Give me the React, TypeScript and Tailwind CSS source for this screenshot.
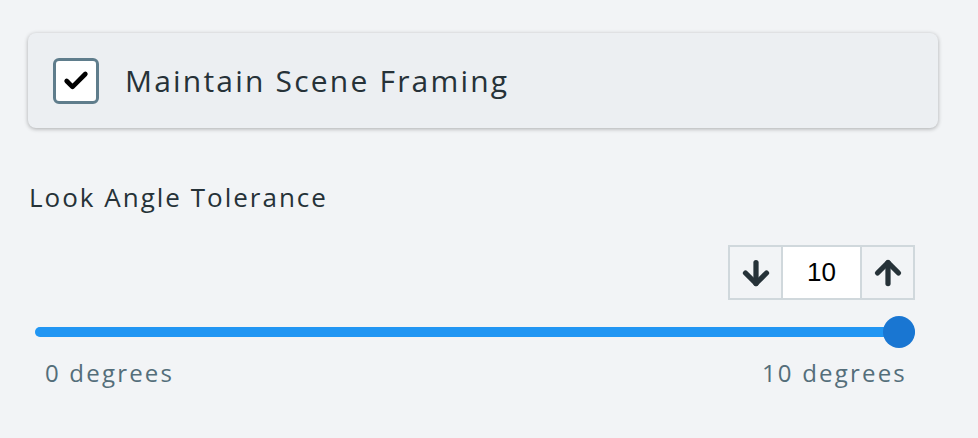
import { Check, ArrowDown, ArrowUp } from 'lucide-react';

export default function App() {
  const value = 10;
  const max = 10;
  const pct = (value / max) * 100;

  return (
    <div
      className="w-[978px] h-[438px] bg-[#f2f4f6] text-[#263238] overflow-hidden"
      style={{ fontFamily: '"Open Sans", "DejaVu Sans", sans-serif' }}
    >
      <div className="pt-[33px] pl-[28px] pr-[40px]">
        <div className="h-[95px] rounded-lg bg-[#eceff2] shadow-[0_1px_4px_rgba(0,0,0,0.3)] flex items-center pl-[25px]">
          <div className="w-[46px] h-[46px] rounded-md border-[3px] border-[#5f7d8c] bg-white flex items-center justify-center">
            <Check className="w-7 h-7 text-black" strokeWidth={4} />
          </div>
          <span className="ml-[26px] text-[30px] tracking-[2.2px]">Maintain Scene Framing</span>
        </div>

        <div className="mt-[52px] pl-[1px] text-[26px] leading-[34px] tracking-[2px]">Look Angle Tolerance</div>

        <div className="mt-[31px] flex justify-end pr-[23px]">
          <div className="flex h-[55px] border-2 border-[#d0d8dc]">
            <button className="w-[53px] flex items-center justify-center border-r-2 border-[#d0d8dc]">
              <ArrowDown className="w-9 h-9 text-[#263238]" strokeWidth={3.5} />
            </button>
            <div
              className="w-[77px] bg-white flex items-center justify-center text-[26px] text-black"
              style={{ fontFamily: '"Liberation Sans", Arial, sans-serif' }}
            >
              {value}
            </div>
            <button className="w-[53px] flex items-center justify-center border-l-2 border-[#d0d8dc]">
              <ArrowUp className="w-9 h-9 text-[#263238]" strokeWidth={3.5} />
            </button>
          </div>
        </div>

        <div className="relative mt-[22px] ml-[7px] mr-[23px] h-[20px] flex items-center">
          <div className="w-full h-[10px] rounded-full bg-[#bbdefb]">
            <div className="h-full rounded-full bg-[#2196f3]" style={{ width: `${pct}%` }} />
          </div>
          <div
            className="absolute top-1/2 w-[32px] h-[32px] -mt-[16px] rounded-full bg-[#1976d2]"
            style={{ left: `calc(${pct}% - 32px)` }}
          />
        </div>

        <div className="mt-[13px] flex justify-between pl-[17px] pr-[31px] text-[24px] tracking-[2.2px] text-[#546e7a]">
          <span>0 degrees</span>
          <span>10 degrees</span>
        </div>
      </div>
    </div>
  );
}
